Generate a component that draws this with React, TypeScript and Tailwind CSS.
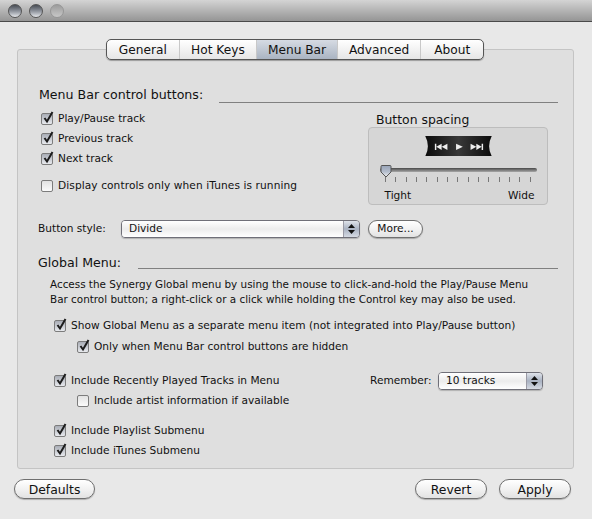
import type { ReactNode } from 'react';

const Check = ({ on = true, label, className = '', labelClass = '' }: { on?: boolean; label: string; className?: string; labelClass?: string }) => (
  <div className={`flex items-center h-[20px] ${className}`}>
    <span className={`relative w-[12px] h-[12px] shrink-0 rounded-[2px] border border-[#7c7c7c] bg-gradient-to-b ${on ? 'from-[#a9adb6] to-[#e8eaee]' : 'from-[#e2e2e2] to-[#fbfbfb]'}`}>
      {on && (
        <svg viewBox="0 0 14 14" className="absolute -top-[4px] left-0 w-[14px] h-[14px]">
          <path d="M2.5 8 L5 11.5 L10.5 2" fill="none" stroke="#1c1c1c" strokeWidth="2" />
        </svg>
      )}
    </span>
    <span className={`ml-[5px] whitespace-nowrap ${labelClass}`}>{label}</span>
  </div>
);

const Pill = ({ children, className = '' }: { children: ReactNode; className?: string }) => (
  <button className={`rounded-full border border-[#6f6f6f] bg-gradient-to-b from-[#ffffff] via-[#f2f2f2] to-[#e2e2e2] shadow-[0_1px_1px_rgba(0,0,0,0.25)] text-center text-[#111] ${className}`}>
    {children}
  </button>
);

const Popup = ({ label, className = '' }: { label: string; className?: string }) => (
  <div className={`flex h-[18px] rounded-[4px] border border-[#6f6f78] overflow-hidden shadow-[0_1px_1px_rgba(0,0,0,0.2)] ${className}`}>
    <div className="flex-1 pl-[7px] flex items-center bg-gradient-to-b from-white via-[#ececec] to-white">{label}</div>
    <div className="w-[16px] flex flex-col items-center justify-center gap-[2px] border-l border-[#9a9aa5] bg-gradient-to-b from-[#dfe3ea] via-[#a9b2c2] to-[#d5dae3]">
      <svg viewBox="0 0 7 4" className="w-[7px] h-[4px]"><path d="M3.5 0 L7 4 H0 Z" fill="#111" /></svg>
      <svg viewBox="0 0 7 4" className="w-[7px] h-[4px]"><path d="M0 0 H7 L3.5 4 Z" fill="#111" /></svg>
    </div>
  </div>
);

const tabs = ['General', 'Hot Keys', 'Menu Bar', 'Advanced', 'About'];
const tabWidths = ['w-[72px]', 'w-[78px]', 'w-[81px]', 'w-[84px]', 'w-[63px]'];
const ticks = Array.from({ length: 15 }, (_, i) => i);

export default function App() {
  return (
    <div className="w-[592px] h-[519px] bg-[#e8e8e8] text-[#111] text-[10.6px] overflow-hidden" style={{ fontFamily: '"DejaVu Sans", sans-serif' }}>
      {/* title bar */}
      <div className="h-[22px] flex items-center gap-[7px] pl-[8px] border-b border-[#4a4a4a] bg-gradient-to-b from-[#d4d4d4] to-[#959595]">
        <span className="w-[14px] h-[14px] rounded-full border border-[#555] bg-gradient-to-b from-[#484d55] via-[#8d929b] to-[#e6e8ec]" />
        <span className="w-[14px] h-[14px] rounded-full border border-[#555] bg-gradient-to-b from-[#484d55] via-[#8d929b] to-[#e6e8ec]" />
        <span className="w-[14px] h-[14px] rounded-full border border-[#969696] bg-gradient-to-b from-[#9c9c9c] to-[#c8c8c8]" />
      </div>

      {/* tabbed panel */}
      <div className="mt-[27px] ml-[17px] w-[557px] h-[420px] rounded-[3px] border border-[#c4c4c4] bg-[#dfdfdf]">
        <div className="-mt-[11px] ml-[88px] flex w-[378px] h-[21px] rounded-[5px] border border-[#555] bg-gradient-to-b from-white to-[#e6e6e6] shadow-[0_1px_1px_rgba(0,0,0,0.3)] overflow-hidden text-[12.2px]">
          {tabs.map((t, i) => (
            <div key={t} className={`${tabWidths[i]} pt-[1px] flex items-center justify-center ${i > 0 ? 'border-l border-[#c8c8c8]' : ''} ${t === 'Menu Bar' ? 'bg-gradient-to-b from-[#d6dbe3] to-[#aab4c2]' : ''}`}>{t}</div>
          ))}
        </div>

        <div className="pl-[21px] pr-[15px]">
          {/* menu bar section */}
          <div className="mt-[25px] h-[20px] flex items-center text-[12.6px]">
            <span className="whitespace-nowrap">Menu Bar control buttons:</span>
            <div className="flex-1 ml-[16px] mt-[15px] border-t border-[#808080]" />
          </div>
          <div className="flex h-[112px]">
            <div className="mt-[4px] pl-[2px] w-[329px] flex flex-col">
              <Check label="Play/Pause track" />
              <Check label="Previous track" />
              <Check label="Next track" />
              <Check on={false} label="Display controls only when iTunes is running" className="mt-[7px]" labelClass="tracking-[0.09px]" />
            </div>
            <div className="w-[180px] mt-[5px]">
              <div className="pl-[8px] pt-[1px] h-[17px] text-[12.4px]">Button spacing</div>
              <div className="h-[78px] rounded-[4px] border border-[#bdbdbd] bg-[#d6d6d6] flex flex-col items-center">
                <svg viewBox="0 0 69 21" className="mt-[8px] w-[69px] h-[21px]">
                  <defs>
                    <linearGradient id="ctl" x1="0" x2="1" y1="0" y2="0">
                      <stop offset="0" stopColor="#0c0c0c" />
                      <stop offset="0.5" stopColor="#383838" />
                      <stop offset="1" stopColor="#0c0c0c" />
                    </linearGradient>
                  </defs>
                  <path d="M0 0 H69 Q63.5 10.5 69 21 H0 Q5.5 10.5 0 0 Z" fill="url(#ctl)" />
                  <path d="M10 8 H11.5 V14.5 H10 Z M11.5 11.2 L17 8 V14.5 Z M17 11.2 L23 8 V14.5 Z" fill="#eee" />
                  <path d="M32 8 L39 11.2 L32 14.5 Z" fill="#eee" />
                  <path d="M60 8 H58.5 V14.5 H60 Z M58.5 11.2 L53 8 V14.5 Z M53 11.2 L47 8 V14.5 Z" fill="#eee" />
                </svg>
                <div className="relative mt-[12px] w-[157px] h-[4px] rounded-full bg-gradient-to-b from-[#4a4a4a] to-[#a8a8a8]">
                  <svg viewBox="0 0 12 13" className="absolute -top-[3px] left-0 w-[12px] h-[13px]">
                    <defs>
                      <linearGradient id="thumb" x1="0" x2="0" y1="0" y2="1">
                        <stop offset="0" stopColor="#98a4b8" />
                        <stop offset="0.55" stopColor="#b4bdcc" />
                        <stop offset="1" stopColor="#f0f0f0" />
                      </linearGradient>
                    </defs>
                    <path d="M1 1.5 Q1 .5 2 .5 H10 Q11 .5 11 1.5 V7 L6 12 L1 7 Z" fill="url(#thumb)" stroke="#555" />
                  </svg>
                </div>
                <div className="mt-[5px] w-[146px] flex justify-between">
                  {ticks.map(i => <span key={i} className="w-[1px] h-[5px] bg-[#777]" />)}
                </div>
                <div className="mt-[6px] ml-[3px] w-[150px] flex justify-between">
                  <span>Tight</span>
                  <span>Wide</span>
                </div>
              </div>
            </div>
          </div>
          <div className="mt-[2px] -ml-[1px] flex items-center h-[20px]">
            <span className="w-[83px] whitespace-nowrap">Button style:</span>
            <Popup label="Divide" className="w-[239px]" />
            <Pill className="ml-[8px] w-[55px] h-[18px] text-[10.6px]">More...</Pill>
          </div>

          {/* global menu section */}
          <div className="mt-[14px] -ml-[1px] h-[20px] flex items-center text-[12.6px]">
            <span className="whitespace-nowrap">Global Menu:</span>
            <div className="flex-1 ml-[17px] mt-[10px] border-t border-[#808080]" />
          </div>
          <div className="ml-[11px] mt-[4px] text-[10.4px] leading-[15px] whitespace-nowrap">
            <p>Access the Synergy Global menu by using the mouse to click-and-hold the Play/Pause Menu</p>
            <p>Bar control button; a right-click or a click while holding the Control key may also be used.</p>
          </div>
          <div className="ml-[15px] mt-[9px]">
            <Check label="Show Global Menu as a separate menu item (not integrated into Play/Pause button)" />
            <Check label="Only when Menu Bar control buttons are hidden" className="ml-[23px] mt-[1px]" />
            <div className="mt-[14px] flex items-center">
              <Check label="Include Recently Played Tracks in Menu" className="w-[316px]" />
              <span className="w-[68px] whitespace-nowrap">Remember:</span>
              <Popup label="10 tracks" className="w-[105px]" />
            </div>
            <Check on={false} label="Include artist information if available" className="ml-[23px]" />
            <Check label="Include Playlist Submenu" className="mt-[10px]" />
            <Check label="Include iTunes Submenu" />
          </div>
        </div>
      </div>

      {/* footer buttons */}
      <div className="mt-[10px] pl-[14px] pr-[21px] flex items-center text-[12.4px]">
        <Pill className="w-[81px] h-[20px] pt-[1px]">Defaults</Pill>
        <div className="flex-1" />
        <Pill className="w-[72px] h-[20px] pt-[1px]">Revert</Pill>
        <Pill className="ml-[12px] w-[72px] h-[20px] pt-[1px]">Apply</Pill>
      </div>
    </div>
  );
}
